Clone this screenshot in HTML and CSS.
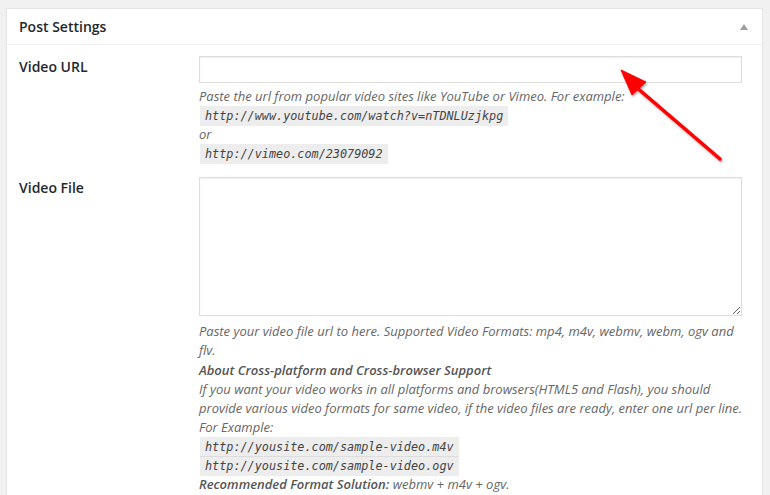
FILE: index.html
```html
<!DOCTYPE html>
<html>
<head>
<meta charset="utf-8">
<link rel="stylesheet" href="styles.css">
</head>
<body>
<div class="postbox">
  <div class="postbox-header">
    <h2 class="hndle">Post Settings</h2>
    <span class="toggle-arrow"></span>
  </div>
  <div class="inside">
    <div class="field-row row-url">
      <label class="field-label">Video URL</label>
      <div class="field-body">
        <input class="text-input" type="text">
        <p class="description">Paste the url from popular video sites like YouTube or Vimeo. For example:<br><code>http://www.youtube.com/watch?v=nTDNLUzjkpg</code><br>or<br><code>http://vimeo.com/23079092</code></p>
      </div>
    </div>
    <div class="field-row row-file">
      <label class="field-label">Video File</label>
      <div class="field-body">
        <textarea class="text-area"></textarea>
        <p class="description desc-wide">Paste your video file url to here. Supported Video Formats: mp4, m4v, webmv, webm, ogv and flv.<br><strong>About Cross-platform and Cross-browser Support</strong><br>If you want your video works in all platforms and browsers(HTML5 and Flash), you should provide various video formats for same video, if the video files are ready, enter one url per line.<br>For Example:<br><code>http://yousite.com/sample-video.m4v</code><br><code>http://yousite.com/sample-video.ogv</code><br><strong>Recommended Format Solution:</strong> webmv + m4v + ogv.</p>
      </div>
    </div>
  </div>
</div>
<svg class="annotation-arrow" width="770" height="495" viewBox="0 0 770 495">
  <defs>
    <filter id="sh" x="-20%" y="-20%" width="140%" height="140%">
      <feDropShadow dx="1" dy="1.5" stdDeviation="1" flood-color="#000" flood-opacity="0.35"/>
    </filter>
  </defs>
  <g filter="url(#sh)">
    <line x1="720" y1="159" x2="636" y2="87" stroke="#f00" stroke-width="3.6" stroke-linecap="round"/>
    <polygon points="621,70 646,82 632,95" fill="#f00" stroke="#f00" stroke-width="1" stroke-linejoin="round"/>
  </g>
</svg>
</body>
</html>
```

FILE: styles.css
```css
html, body {
  margin: 0;
  padding: 0;
}
body {
  background: #f1f1f1;
  font-family: "Open Sans", "Liberation Sans", sans-serif;
  color: #444;
  width: 770px;
  height: 495px;
  overflow: hidden;
  position: relative;
}
.postbox {
  margin: 8px 0 0 6px;
  width: 755px;
  background: #fff;
  border: 1px solid #e5e5e5;
  box-shadow: 0 1px 1px rgba(0,0,0,0.04);
  height: 600px;
}
.postbox-header {
  display: flex;
  align-items: center;
  justify-content: space-between;
  border-bottom: 1px solid #eee;
  height: 35px;
  padding: 0 14px 0 12px;
}
.hndle {
  margin: 0;
  font-size: 14px;
  font-weight: 600;
  line-height: 19.6px;
  color: #23282d;
  padding-top: 1px;
}
.toggle-arrow {
  width: 0;
  height: 0;
  border-left: 4.5px solid transparent;
  border-right: 4.5px solid transparent;
  border-bottom: 6px solid #9b9fa6;
  margin-top: 1px;
}
.inside {
  padding: 11px 0 0 12px;
}
.field-row {
  display: flex;
}
.row-file {
  margin-top: 14px;
}
.field-label {
  width: 180px;
  flex: none;
  font-size: 14px;
  font-weight: 600;
  color: #23282d;
  line-height: 19.6px;
  padding-top: 1px;
}
.field-body {
  width: 543px;
}
.text-input {
  display: block;
  box-sizing: border-box;
  width: 543px;
  height: 27px;
  margin: 0;
  border: 1px solid #ddd;
  box-shadow: inset 0 1px 2px rgba(0,0,0,0.07);
  background: #fff;
}
.text-area {
  display: block;
  box-sizing: border-box;
  width: 543px;
  height: 139px;
  margin: 0;
  border: 1px solid #ddd;
  box-shadow: inset 0 1px 2px rgba(0,0,0,0.07);
  background: #fff;
  resize: vertical;
}
.description {
  margin: 4px 0 0;
  font-size: 13px;
  font-style: italic;
  line-height: 19.1px;
  color: #666;
}
.desc-wide {
  margin-top: 6px;
  width: 549px;
}
.description strong {
  font-weight: 600;
  color: #555;
}
.description code {
  font-family: "DejaVu Sans Mono", "Liberation Mono", monospace;
  font-style: italic;
  font-size: 11.8px;
  line-height: 1;
  color: #444;
  background: rgba(0,0,0,0.07);
  padding: 3px 5px 3px;
  margin: 0 1px;
}
.annotation-arrow {
  position: absolute;
  left: 0;
  top: 0;
  pointer-events: none;
}
```
